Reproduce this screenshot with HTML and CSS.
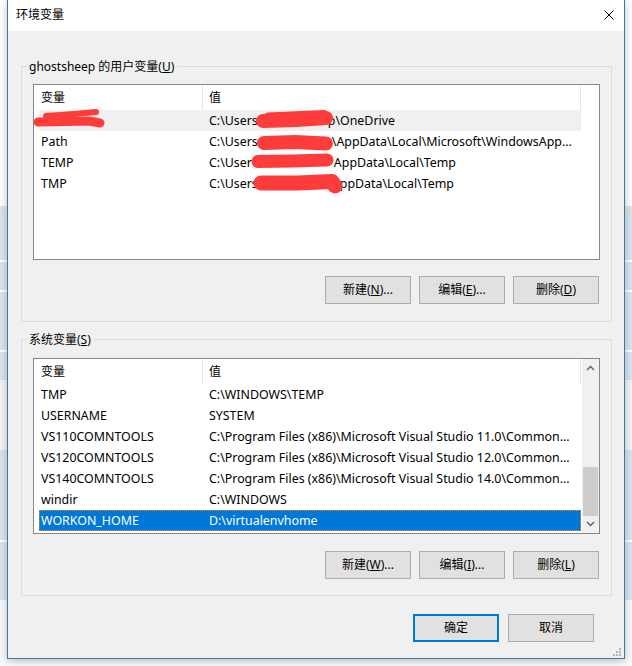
FILE: index.html
```html
<!DOCTYPE html>
<html lang="zh-CN">
<head>
<meta charset="utf-8">
<title>环境变量</title>
<link rel="stylesheet" href="styles.css">
</head>
<body>
<div class="desktop">
  <div class="dialog">
    <div class="titlebar">
      <span class="title">环境变量</span>
      <svg class="close" width="10" height="10" viewBox="0 0 10 10"><path d="M0.5 0.5 L9.5 9.5 M9.5 0.5 L0.5 9.5" stroke="#000" stroke-width="1" fill="none"/></svg>
    </div>
    <div class="content">
      <fieldset class="group g1">
        <legend>ghostsheep 的用户变量(<u>U</u>)</legend>
        <div class="list">
          <div class="list-main">
            <div class="lv-header"><div class="hc c1">变量</div><div class="hc c2">值</div></div>
            <div class="row inactive">
              <div class="cell name"><svg class="blob b-name" width="70" height="21" viewBox="0 0 70 21"><path d="M4 12 L30 11.5 L55 11 L66 13" stroke-width="9"/><path d="M12 6 L40 4 L62 2" stroke-width="6"/></svg></div>
              <div class="cell val">C:\Users<svg class="blob b1" width="77" height="21" viewBox="0 0 77 21"><path d="M7 11 L40 10 L70 8" stroke-width="14"/><path d="M12 6 L68 3.5" stroke-width="7"/></svg>p\OneDrive</div>
            </div>
            <div class="row">
              <div class="cell name">Path</div>
              <div class="cell val">C:\Users<svg class="blob b2" width="76" height="21" viewBox="0 0 76 21"><path d="M7 12 L38 11 L69 12.5" stroke-width="14"/></svg>\AppData\Local\Microsoft\WindowsApp...</div>
            </div>
            <div class="row">
              <div class="cell name">TEMP</div>
              <div class="cell val">C:\User<svg class="blob b3" width="83" height="21" viewBox="0 0 83 21"><path d="M7 9.5 L42 9 L76 8" stroke-width="13"/></svg>AppData\Local\Temp</div>
            </div>
            <div class="row">
              <div class="cell name">TMP</div>
              <div class="cell val">C:\Users<svg class="blob b4" width="87" height="21" viewBox="0 0 87 21"><path d="M7 10 L44 10 L78 8.5 L81 13" stroke-width="15"/></svg>ppData\Local\Temp</div>
            </div>
          </div>
        </div>
        <div class="btn-row">
          <button class="btn">新建(<u>N</u>)...</button>
          <button class="btn">编辑(<u>E</u>)...</button>
          <button class="btn">删除(<u>D</u>)</button>
        </div>
      </fieldset>

      <fieldset class="group g2">
        <legend>系统变量(<u>S</u>)</legend>
        <div class="list">
          <div class="list-main">
            <div class="lv-header"><div class="hc c1">变量</div><div class="hc c2">值</div></div>
            <div class="row"><div class="cell name">TMP</div><div class="cell val">C:\WINDOWS\TEMP</div></div>
            <div class="row"><div class="cell name">USERNAME</div><div class="cell val">SYSTEM</div></div>
            <div class="row"><div class="cell name">VS110COMNTOOLS</div><div class="cell val">C:\Program Files (x86)\Microsoft Visual Studio 11.0\Common...</div></div>
            <div class="row"><div class="cell name">VS120COMNTOOLS</div><div class="cell val">C:\Program Files (x86)\Microsoft Visual Studio 12.0\Common...</div></div>
            <div class="row"><div class="cell name">VS140COMNTOOLS</div><div class="cell val">C:\Program Files (x86)\Microsoft Visual Studio 14.0\Common...</div></div>
            <div class="row"><div class="cell name">windir</div><div class="cell val">C:\WINDOWS</div></div>
            <div class="row selected"><div class="cell name">WORKON_HOME</div><div class="cell val">D:\virtualenvhome</div></div>
          </div>
          <div class="scrollbar">
            <div class="sb-btn"><svg width="17" height="17" viewBox="0 0 17 17"><path d="M5 11 L8.5 7.5 L12 11" stroke="#606060" stroke-width="1.4" fill="none"/></svg></div>
            <div class="sb-track"><div class="sb-thumb"></div></div>
            <div class="sb-btn"><svg width="17" height="17" viewBox="0 0 17 17"><path d="M5 6 L8.5 9.5 L12 6" stroke="#606060" stroke-width="1.4" fill="none"/></svg></div>
          </div>
        </div>
        <div class="btn-row">
          <button class="btn">新建(<u>W</u>)...</button>
          <button class="btn">编辑(<u>I</u>)...</button>
          <button class="btn">删除(<u>L</u>)</button>
        </div>
      </fieldset>

      <div class="dialog-buttons">
        <button class="btn default">确定</button>
        <button class="btn">取消</button>
      </div>
    </div>
    <svg class="grip" width="10" height="10" viewBox="0 0 10 10">
      <g fill="#b4b4b4">
        <rect x="7" y="1" width="2" height="2"/>
        <rect x="4" y="4" width="2" height="2"/><rect x="7" y="4" width="2" height="2"/>
        <rect x="1" y="7" width="2" height="2"/><rect x="4" y="7" width="2" height="2"/><rect x="7" y="7" width="2" height="2"/>
      </g>
    </svg>
  </div>
</div>
</body>
</html>
```
FILE: styles.css
```css
* { box-sizing: border-box; }

html, body {
  margin: 0;
  padding: 0;
  width: 632px;
  height: 666px;
  overflow: hidden;
}

body {
  font-family: "Noto Sans", "Noto Sans CJK SC", sans-serif;
  font-size: 12px;
  color: #000;
  background:
    linear-gradient(to bottom,
      #ffffff 0, #ffffff 206px,
      #e4e4e4 206px, #e4e4e4 217px,
      #dbe3ec 217px, #dbe3ec 260px,
      #ffffff 260px, #ffffff 262px,
      #dbe3ec 262px, #dbe3ec 290px,
      #ffffff 290px, #ffffff 292px,
      #dbe3ec 292px, #dbe3ec 350px,
      #ffffff 350px, #ffffff 352px,
      #dbe3ec 352px, #dbe3ec 380px,
      #f4f4f4 380px, #f4f4f4 450px,
      #dbe3ec 450px, #dbe3ec 540px,
      #ffffff 540px, #ffffff 542px,
      #dbe3ec 542px, #dbe3ec 600px,
      #fafafa 600px);
}

.desktop {
  padding-left: 7px;
}

.dialog {
  position: relative;
  width: 618px;
  height: 659px;
  border: 1px solid #2f7cb5;
  border-top: none;
  background: #f0f0f0;
  display: flex;
  flex-direction: column;
  box-shadow: 0 2px 8px rgba(0, 0, 0, 0.25);
}

.titlebar {
  height: 31px;
  background: #ffffff;
  display: flex;
  align-items: center;
  justify-content: space-between;
  padding: 0 10px 1px 8px;
}

.title {
  font-size: 12px;
  line-height: 16px;
}

.close {
  display: block;
}

.content {
  flex: 1;
  padding: 0 12px 0 13px;
}

.group {
  margin: 0;
  padding: 0 0 17px 0;
  border: 1px solid #dcdcdc;
  min-width: 0;
}

.g1 { margin-top: 27px; }
.g2 { margin-top: 9px; padding-bottom: 16px; }

.group legend {
  margin-left: 5px;
  padding: 0 3px 0 2px;
  height: 17px;
  line-height: 17px;
  font-size: 12px;
}

.list {
  position: relative;
  margin: 9px 11px 0 11px;
  height: 176px;
  border: 1px solid #828790;
  background: #ffffff;
  display: flex;
  overflow: hidden;
  font-size: 12.4px;
}

.g2 .list { margin-top: 10px; }

.list-main {
  flex: 1;
  min-width: 0;
}

.lv-header {
  display: flex;
  height: 25px;
  font-size: 12px;
}

.hc {
  margin-top: 1px;
  height: 24px;
  line-height: 23px;
  border-right: 1px solid #e5e5e5;
  white-space: nowrap;
}

.hc.c1 { width: 169px; padding-left: 7px; }
.hc.c2 { width: 378px; padding-left: 6px; }

.row {
  display: flex;
  margin-left: 5px;
  width: 542px;
  height: 21px;
  line-height: 21px;
  white-space: nowrap;
}

.row.inactive { background: #f0f0f0; }

.row.selected {
  background: #0078d7;
  color: #ffffff;
  outline: 1px dotted #ff8728;
  outline-offset: -1px;
}

.cell.name { width: 163px; padding-left: 2px; overflow: visible; }
.cell.val { flex: 1; padding-left: 7px; overflow: hidden; }

.blob {
  position: relative;
  z-index: 1;
  display: inline-block;
  vertical-align: top;
  overflow: visible;
  fill: none;
  stroke: #ff3c3c;
  stroke-linecap: round;
  stroke-linejoin: round;
}

.b-name { margin-left: -7px; }
.b1 { margin: 0 -5px 0 -2px; }
.b2 { margin: 0 -1px 0 -1px; }
.b3 { margin: 0 0 0 -1px; }
.b4 { margin: 0 -1px 0 -4px; }

.scrollbar {
  width: 17px;
  background: #f0f0f0;
  display: flex;
  flex-direction: column;
}

.sb-btn {
  height: 17px;
}

.sb-btn svg { display: block; }

.sb-track {
  flex: 1;
  display: flex;
  flex-direction: column;
  justify-content: flex-end;
}

.sb-thumb {
  height: 49px;
  margin: 0 1px;
  background: #cdcdcd;
}

.btn-row {
  display: flex;
  justify-content: flex-end;
  gap: 8px;
  margin: 16px 12px 0 0;
}

.g2 .btn-row { margin-top: 17px; }

.btn {
  width: 86px;
  height: 28px;
  padding: 0;
  margin: 0;
  border: 1px solid #adadad;
  background: #e1e1e1;
  font-family: "Noto Sans", "Noto Sans CJK SC", sans-serif;
  font-size: 12px;
  color: #000;
  line-height: 26px;
}

.btn.default {
  border: 2px solid #0078d7;
  line-height: 24px;
}

.dialog-buttons {
  display: flex;
  justify-content: flex-end;
  gap: 9px;
  margin: 18px 18px 0 0;
}

.grip {
  position: absolute;
  right: 2px;
  bottom: 1px;
}
```
